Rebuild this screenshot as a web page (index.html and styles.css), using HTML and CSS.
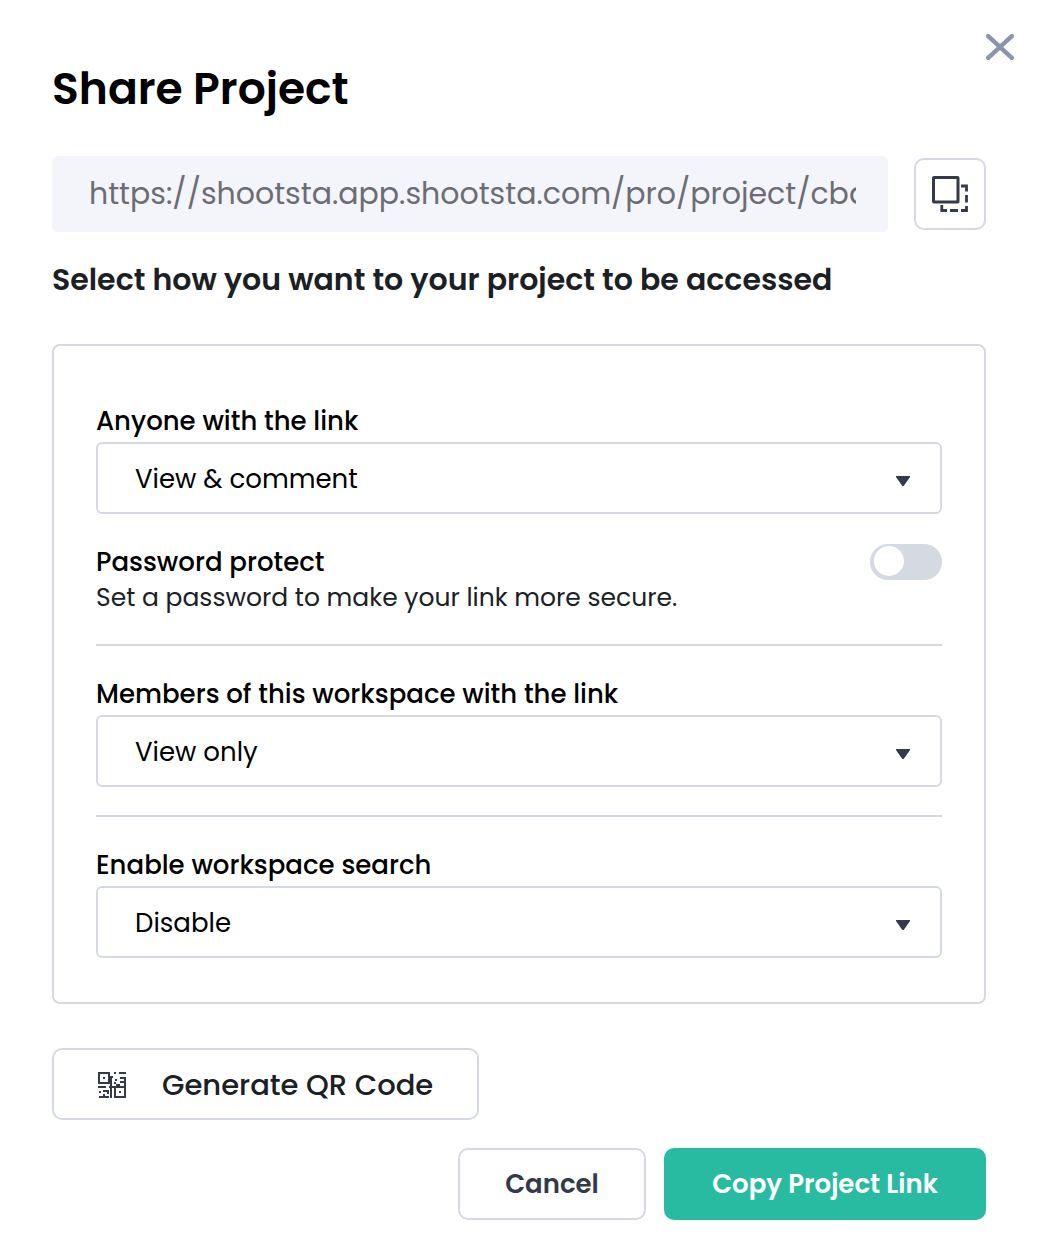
FILE: index.html
```
<!DOCTYPE html>
<html lang="en">
<head>
    <meta charset="UTF-8">
    <meta name="viewport" content="width=device-width, initial-scale=1.0">
    <title>Share Project</title>
    <link rel="stylesheet" href="styles.css">
</head>
<body>
    <main class="share">
        <button class="close" type="button" aria-label="Close">
            <svg width="28" height="26" viewBox="0 0 28 26" fill="none" stroke="currentColor" stroke-width="4.500" stroke-linecap="round">
                <path d="M2.2 2.2L25.8 23.8M25.8 2.2L2.2 23.8"/>
            </svg>
        </button>
        <h1>Share Project</h1>

        <div class="link-row">
            <input class="link-input" type="text" aria-label="Project link" value="https://shootsta.app.shootsta.com/pro/project/cbdashboard" readonly>
            <button class="copy-icon" type="button" aria-label="Copy link">
                <svg width="36" height="36" viewBox="0 0 36 36" fill="none" stroke="currentColor">
                    <rect x="1.5" y="1.5" width="24.5" height="24.5" rx="0.5" stroke-width="3"/>
                    <path d="M29 10h5.5v5.5M34.5 19v7.5M34.5 30v4.5H29M26 34.5h-8M15 34.5h-5.200V29" stroke-width="2.800"/>
                </svg>
            </button>
        </div>

        <h2>Select how you want to your project to be accessed</h2>

        <form class="card">
            <label class="label" for="anyone">Anyone with the link</label>
            <div class="select">
                <select id="anyone">
                    <option>View &amp; comment</option>
                </select>
            </div>

            <div class="password">
                <div>
                    <label class="password-label" for="password">Password protect</label>
                    <p>Set a password to make your link more secure.</p>
                </div>
                <input class="toggle" type="checkbox" id="password">
            </div>

            <hr>

            <label class="label" for="members">Members of this workspace with the link</label>
            <div class="select">
                <select id="members">
                    <option>View only</option>
                </select>
            </div>

            <hr>

            <label class="label" for="search">Enable workspace search</label>
            <div class="select">
                <select id="search">
                    <option>Disable</option>
                </select>
            </div>
        </form>

        <button class="btn btn-qr" type="button">
            <svg width="28" height="26" viewBox="0 0 28 26" fill="none" stroke="#343a47" stroke-width="2">
                <path d="M1 1h10v10H1zM17 15h10v10H17z"/>
                <path d="M5 6h2M21 20h2M12 5h3M13 5v21M16 1h2M21 1h7M27 5v10M22 6h5M22 10h5M18 7v2M16 11h2M20 13h2M0 15h8M11 15h6M1 20h2M5 19h6M10 19v3M1 25h10M6 22v3M18 13h2"/>
            </svg>
            Generate QR Code
        </button>

        <div class="actions">
            <button class="btn btn-cancel" type="button">Cancel</button>
            <button class="btn btn-primary" type="button">Copy Project Link</button>
        </div>
    </main>
</body>
</html>
```
FILE: styles.css
```
* {
    box-sizing: border-box;
}
body {
    font-family: "Poppins", "Inter", sans-serif;
    background-color: #fff;
    color: #000;
    margin: 0;
}
button, input, select {
    font-family: inherit;
}
button {
    cursor: pointer;
}
svg {
    display: block;
    flex-shrink: 0;
}
.share {
    position: relative;
    padding: 56px 58px 24px 52px;
}
.close {
    position: absolute;
    top: 34px;
    right: 30px;
    padding: 0;
    border: 0;
    background: none;
    color: #8d95ab;
}
h1 {
    margin: 0 0 34px;
    font-size: 44px;
    line-height: 66px;
    font-weight: 600;
}
.link-row {
    display: flex;
    align-items: center;
    gap: 26px;
}
.link-input {
    flex: 1;
    min-width: 0;
    height: 76px;
    padding: 0 32px 0 37px;
    border: 0;
    border-radius: 6px;
    background-color: #f4f5fa;
    color: #6c6d74;
    font-size: 30px;
}
.copy-icon {
    display: flex;
    align-items: center;
    justify-content: center;
    width: 72px;
    height: 72px;
    padding: 0;
    border: 2px solid #d5d9e3;
    border-radius: 10px;
    background-color: #fff;
    color: #343a47;
}
h2 {
    margin: 26px 0 42px;
    font-size: 30px;
    line-height: 44px;
    font-weight: 600;
    color: #1b2025;
}
.card {
    padding: 54px 42px 44px;
    border: 2px solid #d5d9e3;
    border-radius: 8px;
}
.label {
    display: block;
    font-size: 26px;
    line-height: 42px;
    font-weight: 500;
}
.select {
    position: relative;
}
.select select {
    display: block;
    width: 100%;
    height: 72px;
    padding: 2px 72px 0 37px;
    border: 2px solid #d5d9e3;
    border-radius: 6px;
    background-color: #fff;
    color: #000;
    font-size: 26px;
    appearance: none;
}
/* dropdown arrow */
.select::after {
    content: "";
    position: absolute;
    top: 34px;
    right: 32px;
    width: 14px;
    height: 10px;
    background-color: #343a47;
    clip-path: polygon(0 0, 100% 0, 100% 10%, 55% 100%, 45% 100%, 0 10%);
    pointer-events: none;
}
.password {
    display: flex;
    justify-content: space-between;
    margin-top: 30px;
    font-size: 26px;
    line-height: 36px;
}
.password-label {
    display: block;
    font-weight: 500;
}
.password p {
    margin: 0;
    font-size: 25px;
    color: #1b2025;
}
.toggle {
    flex-shrink: 0;
    width: 72px;
    height: 36px;
    margin: 0;
    padding: 2px 4px;
    border-radius: 18px;
    background-color: #d5d9e1;
    appearance: none;
}
.toggle::before {
    content: "";
    display: block;
    width: 30px;
    height: 30px;
    border-radius: 50%;
    background-color: #fff;
}
.toggle:checked::before {
    margin-left: auto;
}
hr {
    height: 2px;
    margin: 28px 0 27px;
    border: 0;
    background-color: #d5d9e3;
}
.btn {
    display: flex;
    align-items: center;
    justify-content: center;
    height: 72px;
    padding: 0 44px;
    border: 2px solid #d5d9e3;
    border-radius: 10px;
    background-color: #fff;
    color: #343a47;
    font-size: 26px;
    font-weight: 600;
}
.btn-qr {
    gap: 36px;
    min-width: 426px;
    margin-top: 44px;
    padding-top: 2px;
    color: #1b2025;
    font-size: 29px;
    font-weight: 500;
}
.actions {
    display: flex;
    justify-content: flex-end;
    gap: 18px;
    margin-top: 28px;
}
.btn-cancel {
    min-width: 188px;
}
.btn-primary {
    min-width: 322px;
    border-color: #29bba2;
    background-color: #29bba2;
    color: #fff;
}
```
